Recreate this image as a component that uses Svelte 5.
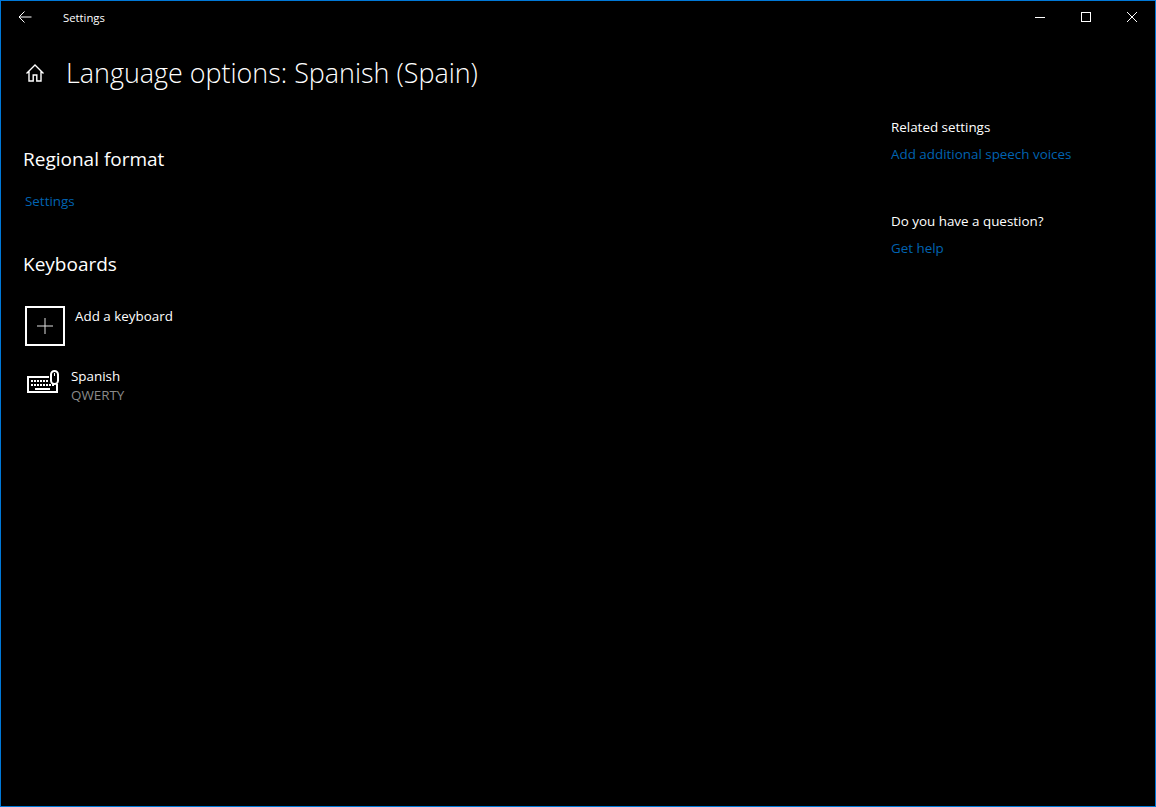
<svelte:options runes={true} />

<script lang="ts">
  const related = [
    { heading: "Related settings", link: "Add additional speech voices" },
    { heading: "Do you have a question?", link: "Get help" },
  ];
</script>

<div class="window">
  <header class="titlebar">
    <button class="back" aria-label="Back">
      <svg width="16" height="16" viewBox="0 0 16 16" fill="none" stroke="currentColor" stroke-width="1">
        <path d="M2 8H14.5M7.5 2.5L2 8l5.5 5.5" />
      </svg>
    </button>
    <span class="app-name">Settings</span>
    <div class="caption">
      <button aria-label="Minimize">
        <svg width="12" height="12" viewBox="0 0 12 12" stroke="currentColor" fill="none"><path d="M1 6.5H11" /></svg>
      </button>
      <button aria-label="Maximize">
        <svg width="12" height="12" viewBox="0 0 12 12" stroke="currentColor" fill="none"><rect x="1.5" y="1.5" width="9" height="9" /></svg>
      </button>
      <button aria-label="Close">
        <svg width="12" height="12" viewBox="0 0 12 12" stroke="currentColor" fill="none"><path d="M1 1L11 11M11 1L1 11" /></svg>
      </button>
    </div>
  </header>

  <div class="page-head">
    <svg class="home" width="20" height="20" viewBox="0 0 20 20" fill="none" stroke="currentColor" stroke-width="1.4">
      <path d="M1.5 10.5L10 2l8.5 8.5M4 8.5V18h4.2v-6h3.6v6H16V8.5" />
    </svg>
    <h1>Language options: Spanish (Spain)</h1>
  </div>

  <div class="body">
    <main>
      <section class="regional">
        <h2>Regional format</h2>
        <a href="#settings">Settings</a>
      </section>

      <section class="keyboards">
        <h2>Keyboards</h2>
        <div class="add">
          <span class="add-box">
            <svg width="18" height="18" viewBox="0 0 18 18" stroke="currentColor" fill="none"><path d="M9 1V17M1 9H17" /></svg>
          </span>
          <span>Add a keyboard</span>
        </div>
        <div class="kbd">
          <svg class="kbd-icon" width="32" height="24" viewBox="0 0 32 24" fill="none" stroke="currentColor" stroke-width="2">
            <path d="M22 7H1V22H30V14" />
            <rect x="24" y="1" width="7" height="13" rx="3.5" />
            <path d="M27.5 3v3" stroke-width="1" />
            <path d="M4 11h18M4 15h23" stroke-dasharray="2 1" />
            <path d="M8 19H23" />
          </svg>
          <div class="kbd-text">
            <span>Spanish</span>
            <span class="sub">QWERTY</span>
          </div>
        </div>
      </section>
    </main>

    <aside>
      {#each related as group}
        <div class="group">
          <h3>{group.heading}</h3>
          <a href="#link">{group.link}</a>
        </div>
      {/each}
    </aside>
  </div>
</div>

<style>
  :global(body) {
    margin: 0;
    background: #000;
  }

  .window {
    box-sizing: border-box;
    width: 1156px;
    height: 807px;
    border: 1px solid #0078d7;
    background: #000;
    color: #fff;
    font-family: "Open Sans", "Noto Sans", sans-serif;
    font-size: 13.4px;
    overflow: hidden;
  }

  button {
    border: none;
    background: none;
    color: inherit;
    padding: 0;
    display: flex;
    align-items: center;
    justify-content: center;
  }

  .titlebar {
    display: flex;
    align-items: center;
    height: 32px;
    font-size: 11.3px;
  }

  .back {
    width: 48px;
    height: 32px;
  }

  .app-name {
    margin-left: 14px;
  }

  .caption {
    display: flex;
    margin-left: auto;
  }

  .caption button {
    width: 46px;
    height: 32px;
  }

  .page-head {
    display: flex;
    align-items: center;
    height: 46px;
    margin-top: 16px;
    padding-left: 24px;
  }

  .home {
    flex-shrink: 0;
    margin-top: 1px;
  }

  h1 {
    margin: 2px 0 0 21px;
    font-size: 26.9px;
    font-weight: 300;
    line-height: 36px;
  }

  .body {
    display: flex;
    justify-content: space-between;
  }

  main {
    padding-left: 23px;
  }

  h2 {
    margin: 0 0 0 -1px;
    font-size: 19px;
    font-weight: 400;
    line-height: 26px;
  }

  a {
    color: #0063b1;
    text-decoration: none;
  }

  .regional {
    padding-top: 51px;
  }

  .regional a {
    display: block;
    margin: 19px 0 0 1px;
    line-height: 20px;
  }

  .keyboards {
    padding-top: 40px;
  }

  .add {
    display: flex;
    gap: 10px;
    margin: 29px 0 0 1px;
    line-height: 20px;
  }

  .add-box {
    box-sizing: border-box;
    display: flex;
    align-items: center;
    justify-content: center;
    width: 40px;
    height: 40px;
    border: 2px solid #fff;
    color: #e0e0e0;
  }

  .kbd {
    display: flex;
    align-items: flex-start;
    gap: 12px;
    margin: 20px 0 0 3px;
  }

  .kbd-icon {
    flex-shrink: 0;
    margin-top: 4px;
  }

  .kbd-text {
    display: flex;
    flex-direction: column;
    line-height: 19px;
    margin-top: 1px;
  }

  .sub {
    color: #8a8a8a;
  }

  aside {
    width: 264px;
    padding-top: 22px;
  }

  .group {
    margin-bottom: 47px;
  }

  h3 {
    margin: 0 0 7px;
    font-size: inherit;
    font-weight: 400;
    line-height: 20px;
  }

  .group a {
    display: block;
    line-height: 20px;
  }
</style>
